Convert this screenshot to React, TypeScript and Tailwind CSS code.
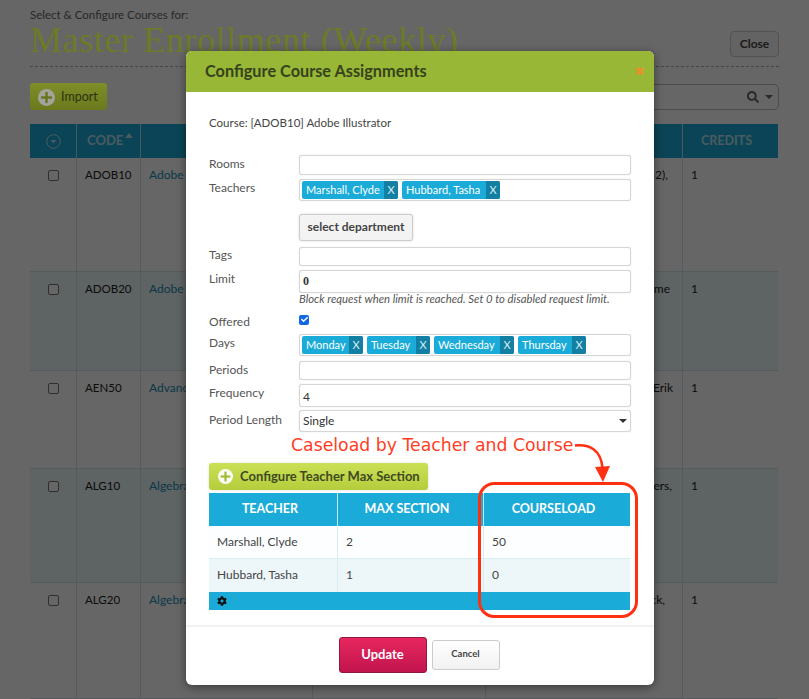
import { FaCog, FaSearch, FaCheck } from "react-icons/fa";

const sans = "font-['Lato','Noto_Sans',sans-serif]";

function PlusCircle({ size, dark }: { size: number; dark?: boolean }) {
  return (
    <svg width={size} height={size} viewBox="0 0 20 20" className="shrink-0">
      <circle cx="10" cy="10" r="10" fill={dark ? "#a3a39b" : "#fbfbf6"} />
      <rect x="8.6" y="3.5" width="2.8" height="13" fill={dark ? "#66741c" : "#9dbb2e"} />
      <rect x="3.5" y="8.6" width="13" height="2.8" fill={dark ? "#66741c" : "#9dbb2e"} />
    </svg>
  );
}

function Tag({ name, w }: { name: string; w: number }) {
  return (
    <span style={{ width: w }} className="flex h-[18px] shrink-0 overflow-hidden rounded-[2px] bg-[#1aabd8] text-[11px] leading-[17px] text-white">
      <span className="flex-1 truncate pl-1">{name}</span>
      <span className="w-[14px] bg-[#137fa2] text-center text-[#d5edf5]">X</span>
    </span>
  );
}

const fieldClass = "block w-[332px] rounded-[3px] border border-[#d6d6d6] bg-white text-[12px] text-[#333] shadow-[0_0_1px_#ccc]";

function Row({ label, mt, children, labelTop = 0 }: { label: string; mt: number; children: React.ReactNode; labelTop?: number }) {
  return (
    <div style={{ marginTop: mt }} className="flex">
      <div style={{ paddingTop: labelTop }} className="w-[90px] shrink-0 text-[12px] leading-[16px] text-[#555]">{label}</div>
      {children}
    </div>
  );
}

function BgRow({ h, alt, code, name, end, pr, extra }: { h: number; alt?: boolean; code: string; name: string; end: string; pr: number; extra?: string }) {
  const line = "border-r border-[#d3e3ea]";
  return (
    <div style={{ height: h }} className={`flex border-b border-[#d3e3ea] text-[12px] text-[#222] ${alt ? "bg-[#ecf7f8]" : "bg-white"}`}>
      <div className={`flex w-[47px] justify-center pt-[12px] ${line}`}>
        <span className="h-[11px] w-[11px] rounded-[2px] border border-[#777] bg-white" />
      </div>
      <div className={`w-[64px] pl-[8px] pt-[8px] text-[11.5px] ${line}`}>{code}</div>
      <div className={`w-[172px] pl-2 pt-[8px] text-[#1a8db5] ${line}`}>{name}</div>
      <div className={`w-[173px] ${line}`} />
      <div style={{ paddingRight: pr }} className={`relative w-[197px] pt-[8px] text-right ${line}`}>
        {end}
        {extra && <span className="absolute bottom-[10px] left-[19px]">{extra}</span>}
      </div>
      <div className="w-[95px] pl-2 pt-[8px]">1</div>
    </div>
  );
}

export default function App() {
  return (
    <div className={`relative h-[699px] w-[809px] overflow-hidden bg-white ${sans}`}>
      {/* page behind the dialog */}
      <div className="px-[30px] pt-[8px]">
        <div className="text-[11.5px] leading-[14px] text-[#666]">Select &amp; Configure Courses for:</div>
        <div className="flex h-[45px] items-start justify-between border-b border-dashed border-[#aaa]">
          <h1 className="relative z-10 whitespace-nowrap font-['Liberation_Serif',serif] text-[36px] font-normal leading-[36px] tracking-[0.6px] text-[#6b7b28]">Master Enrollment (Weekly)</h1>
          <button className="mt-[9px] h-[26px] w-[49px] rounded-[4px] border border-[#ccc] bg-[#f7f7f7] text-[12px] font-bold text-[#444]">Close</button>
        </div>
        <div className="mt-[16px] flex items-center justify-between">
          <button className="relative z-10 flex h-[27px] w-[77px] items-center gap-[6px] rounded-[3px] bg-gradient-to-b from-[#7f8e28] to-[#6b791d] pl-2 pt-[1px] text-[12.5px] text-[#2c3310]">
            <PlusCircle size={17} dark />
            <span>Import</span>
          </button>
          <div className="flex h-[26px] w-[300px] items-center justify-end gap-[6px] rounded-[5px] border border-[#bbb] pr-[5px] text-[#666]">
            <FaSearch size={12} />
            <span className="h-0 w-0 border-x-[4px] border-t-[4px] border-x-transparent border-t-[#666]" />
          </div>
        </div>
        <div className="mt-[14px] w-[748px]">
          <div className="flex h-[34px] bg-[#1aabd8] text-[13px] font-bold leading-[33px] text-[#b9e3f0]">
            <div className="flex w-[47px] items-center justify-center border-r border-[#b5e2f0]">
              <svg width="15" height="15" viewBox="0 0 15 15"><circle cx="7.5" cy="7.5" r="6.800" fill="none" stroke="#b9e3f0" strokeWidth="1" /><path d="M4.500 6h6l-3 3.500z" fill="#b9e3f0" /></svg>
            </div>
            <div className="relative w-[64px] border-r border-[#b5e2f0] pl-[10px]">CODE
              <span className="absolute left-[48px] top-[9px] h-0 w-0 border-x-[4px] border-b-[5px] border-x-transparent border-b-[#b9e3f0]" />
            </div>
            <div className="w-[542px] border-r border-[#b5e2f0]" />
            <div className="w-[95px] pr-[8px] text-center text-[12.500px]">CREDITS</div>
          </div>
          <BgRow h={114} code="ADOB10" name="Adobe Illustrator" end="(max=2)," pr={14} />
          <BgRow h={99} alt code="ADOB20" name="Adobe Photoshop" end="Part time" pr={12} />
          <BgRow h={98} code="AEN50" name="Advanced English" end="Erik" pr={9} />
          <BgRow h={114} alt code="ALG10" name="Algebra 1" end="Masters," pr={10} />
          <BgRow h={116} code="ALG20" name="Algebra 2" end="Black," pr={17} extra="Temporary" />
        </div>
      </div>

      {/* dimming overlay */}
      <div className="absolute inset-0 bg-black/60" />

      {/* dialog */}
      <div className="absolute left-[186px] top-[51px] z-20 h-[634px] w-[468px] overflow-hidden rounded-[6px] bg-white shadow-[0_2px_10px_rgba(0,0,0,0.45)]">
        <div className="flex h-[41px] items-center justify-between bg-[#98b736] pb-[1px] pl-[19px] pr-[10px]">
          <span className="text-[16.300px] font-bold text-[#36421c]">Configure Course Assignments</span>
          <span className="text-[11px] font-bold text-[#e8912a]">✖</span>
        </div>

        <div className="px-[23px]">
          <div className="mt-[23px] text-[11.500px] leading-[16px] text-[#444]">Course: [ADOB10] Adobe Illustrator</div>

          <Row label="Rooms" mt={24} labelTop={1}>
            <input readOnly className={`${fieldClass} h-[20px]`} />
          </Row>
          <Row label="Teachers" mt={4} labelTop={1}>
            <div className={`${fieldClass} flex h-[22px] items-center gap-[4px] pl-[2px]`}>
              <Tag name="Marshall, Clyde" w={96} />
              <Tag name="Hubbard, Tasha" w={98} />
            </div>
          </Row>
          <div className="mt-[12px] pl-[90px]">
            <button className="h-[27px] w-[114px] rounded-[3px] border border-[#ccc] bg-[#f3f3f3] text-[12px] font-bold text-[#444] shadow-[0_0_3px_#ddd]">select department</button>
          </div>
          <Row label="Tags" mt={6}>
            <input readOnly className={`${fieldClass} h-[19px]`} />
          </Row>
          <Row label="Limit" mt={4} labelTop={1}>
            <input readOnly defaultValue="0" className={`${fieldClass} h-[23px] pl-[3px] font-['Liberation_Serif',serif] text-[9.500px] font-bold`} />
          </Row>
          <div className="pl-[90px] text-[11.300px] italic leading-[12px] text-[#555]">Block request when limit is reached. Set 0 to disabled request limit.</div>
          <Row label="Offered" mt={9}>
            <span className="mt-[1px] flex h-[10px] w-[10px] items-center justify-center rounded-[2px] bg-[#1268e0] text-white"><FaCheck size={7} /></span>
          </Row>
          <Row label="Days" mt={4} labelTop={1}>
            <div className={`${fieldClass} flex h-[22px] items-center gap-[4px] pl-[2px]`}>
              <Tag name="Monday" w={61} />
              <Tag name="Tuesday" w={63} />
              <Tag name="Wednesday" w={80} />
              <Tag name="Thursday" w={68} />
            </div>
          </Row>
          <Row label="Periods" mt={5} labelTop={1}>
            <input readOnly className={`${fieldClass} h-[19px]`} />
          </Row>
          <Row label="Frequency" mt={4} labelTop={1}>
            <input readOnly defaultValue="4" className={`${fieldClass} h-[23px] pl-[3px] pt-[2px]`} />
          </Row>
          <Row label="Period Length" mt={3} labelTop={2}>
            <div className={`${fieldClass} flex h-[22px] items-center justify-between pl-[3px] pr-[3px]`}>
              <span>Single</span>
              <span className="h-0 w-0 border-x-[4px] border-t-[4px] border-x-transparent border-t-[#333]" />
            </div>
          </Row>

          <button className="mt-[31px] flex h-[27px] w-[219px] items-center gap-[7px] rounded-[3px] bg-gradient-to-b from-[#cbe055] to-[#b5cd3c] pl-[9px] pt-[1px] text-[13px] font-bold text-[#3f4a22] shadow-[0_0_3px_#ddd]">
            <PlusCircle size={15} />
            Configure Teacher Max Section
          </button>

          <div className="mt-[3px] w-[421px] text-[12px] text-[#444]">
            <div className="flex h-[33px] bg-[#1aabd8] text-center text-[12.500px] font-bold leading-[32px] text-white">
              <div className="w-[129px] border-r border-[#c5e8f3] pr-[6px]">TEACHER</div>
              <div className="w-[146px] border-r border-[#c5e8f3] pr-[7px]">MAX SECTION</div>
              <div className="w-[146px] pr-[7px]">COURSELOAD</div>
            </div>
            <div className="flex h-[33px] border-b border-[#d8ecf3] bg-[#fcfeff] leading-[32px]">
              <div className="w-[129px] border-r border-[#d8ecf3] pl-2">Marshall, Clyde</div>
              <div className="w-[146px] border-r border-[#d8ecf3] pl-2">2</div>
              <div className="w-[146px] pl-2">50</div>
            </div>
            <div className="flex h-[33px] bg-[#edf6f9] leading-[32px]">
              <div className="w-[129px] border-r border-[#d8ecf3] pl-2">Hubbard, Tasha</div>
              <div className="w-[146px] border-r border-[#d8ecf3] pl-2">1</div>
              <div className="w-[146px] pl-2">0</div>
            </div>
            <div className="flex h-[18px] items-center bg-[#1aabd8] pl-[8px] text-[#111]"><FaCog size={10} /></div>
          </div>
        </div>

        <div className="mt-[15px] flex h-[59px] items-start justify-center gap-[5px] border-t-2 border-[#f1f1f1] pr-[2px] pt-[10px]">
          <button className="h-[36px] w-[88px] rounded-[3px] border border-[#8a1a40] bg-gradient-to-b from-[#e8265f] to-[#c1144e] pt-[1px] text-[13px] font-bold text-white">Update</button>
          <button className="mt-[3px] h-[30px] w-[68px] rounded-[3px] border border-[#ccc] bg-gradient-to-b from-white to-[#f1f1f1] text-[9.500px] font-bold text-[#444]">Cancel</button>
        </div>
      </div>

      {/* annotation */}
      <div className="absolute left-[291px] top-[435px] z-30 whitespace-nowrap font-['DejaVu_Sans',sans-serif] text-[17.300px] leading-[20px] text-[#ff3d25]">Caseload by Teacher and Course</div>
      <svg className="absolute left-[470px] top-[438px] z-30" width="175" height="186" viewBox="470 438 175 186" fill="none">
        <path d="M575 445.500 C590 444 601 450 602.500 468" stroke="#ff2f12" strokeWidth="2.500" />
        <path d="M595 467 L610 466 L603 482 Z" fill="#ff2f12" />
        <rect x="479.500" y="483.500" width="157" height="133" rx="15" stroke="#ff2f12" strokeWidth="3" />
      </svg>
    </div>
  );
}
